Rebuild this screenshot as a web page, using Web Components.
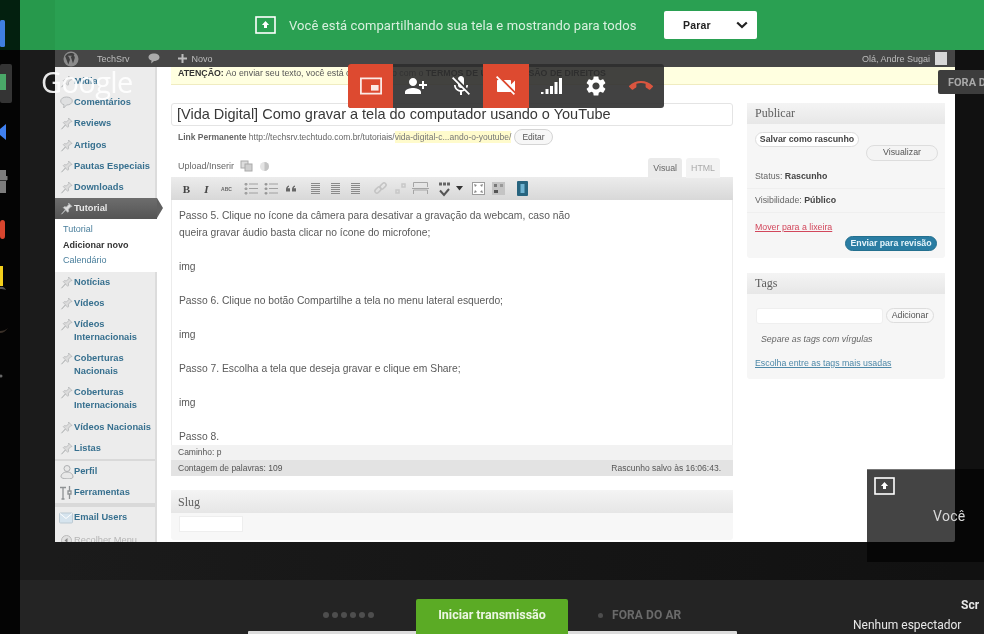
<!doctype html>
<html lang="pt-BR"><head><meta charset="utf-8"><title>Compartilhar tela</title>
<style>
html,body{margin:0;height:100%;background:#141414;overflow:hidden;font-family:"Liberation Sans",Arial,sans-serif}
</style></head><body>
<sr-app>
  <sr-dock slot="dock"></sr-dock>
  <sr-sharebar slot="top">Você está compartilhando sua tela e mostrando para todos</sr-sharebar>
  <sr-screen slot="stage">
    <wp-adminbar slot="bar"></wp-adminbar>
    <wp-menu slot="menu">
      <wp-item icon="pin">Mídia</wp-item>
      <wp-item icon="comment">Comentários</wp-item>
      <wp-item icon="pin">Reviews</wp-item>
      <wp-item icon="pin">Artigos</wp-item>
      <wp-item icon="pin">Pautas Especiais</wp-item>
      <wp-item icon="pin">Downloads</wp-item>
      <wp-item icon="pin" current>Tutorial</wp-item>
      <wp-sub>
        <span>Tutorial</span><b>Adicionar novo</b><span>Calendário</span>
      </wp-sub>
      <wp-item icon="pin">Notícias</wp-item>
      <wp-item icon="pin">Vídeos</wp-item>
      <wp-item icon="pin">Vídeos<br>Internacionais</wp-item>
      <wp-item icon="pin">Coberturas<br>Nacionais</wp-item>
      <wp-item icon="pin">Coberturas<br>Internacionais</wp-item>
      <wp-item icon="pin">Vídeos Nacionais</wp-item>
      <wp-item icon="pin">Listas</wp-item>
      <wp-sep></wp-sep>
      <wp-item icon="user">Perfil</wp-item>
      <wp-item icon="tools">Ferramentas</wp-item>
      <wp-sep style="height:4px"></wp-sep>
      <wp-item icon="mail">Email Users</wp-item>
      <wp-item icon="back" muted>Recolher Menu</wp-item>
    </wp-menu>
    <wp-content slot="content">
      <wp-post slot="main"></wp-post>
      <wp-box slot="side" heading="Publicar"><wp-publish></wp-publish></wp-box>
      <wp-box slot="side" heading="Tags" style="margin-top:15px"><wp-tags></wp-tags></wp-box>
    </wp-content>
  </sr-screen>
  <sr-footer slot="bottom"></sr-footer>
  <sr-overlays slot="over"></sr-overlays>
</sr-app>
<script>
function def(name, css, html, extra){
  const t=document.createElement('template');
  t.innerHTML='<style>'+css+'</style>'+html;
  customElements.define(name,class extends HTMLElement{
    constructor(){super();this.attachShadow({mode:'open'}).appendChild(t.content.cloneNode(true));}
    connectedCallback(){ if(extra) extra(this); }
  });
}
const P={
 pip:'<svg width="24" height="24" viewBox="0 0 24 24"><path fill-rule="evenodd" fill="#fbe9e5" d="M1 3.500h22v17H1zM2.800 5.300v13.400h18.400V5.300z"/><rect x="12" y="11" width="7.600" height="5.600" fill="#fbe9e5"/></svg>',
 add:'<svg width="24" height="24" viewBox="0 0 24 24"><path transform="matrix(-1 0 0 1 24 0)" fill="#fff" d="M15 12c2.210 0 4-1.790 4-4s-1.790-4-4-4-4 1.790-4 4 1.790 4 4 4zm-9-2V7H4v3H1v2h3v3h2v-3h3v-2H6zm9 4c-2.670 0-8 1.340-8 4v2h16v-2c0-2.660-5.330-4-8-4z"/></svg>',
 mic:'<svg width="24" height="24" viewBox="0 0 24 24"><path fill="#fff" d="M19 11h-1.700c0 .74-.16 1.430-.43 2.050l1.230 1.230c.56-.98.9-2.090.9-3.280zm-4.020.17c0-.06.02-.11.02-.17V5c0-1.660-1.340-3-3-3S9 3.340 9 5v.18l5.980 5.990zM4.270 3L3 4.270l6.010 6.010V11c0 1.660 1.330 3 2.990 3 .22 0 .44-.03.65-.08l1.660 1.660c-.71.33-1.500.52-2.310.52-2.760 0-5.300-2.100-5.300-5.100H5c0 3.410 2.720 6.230 6 6.720V21h2v-3.280c.91-.13 1.770-.45 2.540-.9L19.730 21 21 19.730 4.270 3z"/></svg>',
 cam:'<svg width="24" height="24" viewBox="0 0 24 24"><path fill="#fff" d="M21 6.500l-4 4V7c0-.55-.45-1-1-1H9.820L21 17.180V6.500zM3.270 2L2 3.270 4.730 6H4c-.55 0-1 .45-1 1v10c0 .55.45 1 1 1h12c.21 0 .39-.08.54-.18L19.730 21 21 19.730 3.270 2z"/></svg>',
 sig:'<svg width="24" height="24" viewBox="0 0 24 24"><path fill="#fff" d="M2 20h2.500v-2H2zM6.500 20h3v-5h-3zM11 20h3v-8h-3zM15.500 20h3V8h-3zM20 20h3V4h-3z"/></svg>',
 gear:'<svg width="24" height="24" viewBox="0 0 24 24"><path fill="#fff" d="M19.14 12.94c.04-.3.06-.61.06-.94 0-.32-.02-.64-.07-.94l2.03-1.58c.18-.14.23-.41.12-.61l-1.92-3.32c-.12-.22-.37-.29-.59-.22l-2.39.96c-.5-.38-1.03-.7-1.62-.94l-.36-2.54c-.04-.24-.24-.41-.48-.41h-3.84c-.24 0-.43.17-.47.41l-.36 2.54c-.59.24-1.13.57-1.62.94l-2.39-.96c-.22-.08-.47 0-.59.22L2.74 8.87c-.12.21-.08.47.12.61l2.03 1.58c-.05.3-.09.63-.09.94s.02.64.07.94l-2.03 1.58c-.18.14-.23.41-.12.61l1.92 3.32c.12.22.37.29.59.22l2.39-.96c.5.38 1.03.7 1.62.94l.36 2.54c.05.24.24.41.48.41h3.84c.24 0 .44-.17.47-.41l.36-2.54c.59-.24 1.13-.56 1.62-.94l2.39.96c.22.08.47 0 .59-.22l1.92-3.32c.12-.22.07-.47-.12-.61l-2.010-1.58zM12 15.600c-1.980 0-3.600-1.620-3.600-3.600s1.620-3.600 3.600-3.600 3.600 1.620 3.600 3.600-1.620 3.600-3.600 3.600z"/></svg>',
 end:'<svg width="24" height="24" viewBox="0 0 24 24"><path fill="#d9553f" d="M12 9c-1.600 0-3.150.25-4.600.72v3.100c0 .39-.23.74-.56.9-.98.49-1.870 1.120-2.660 1.850-.18.18-.43.28-.7.28-.28 0-.53-.11-.71-.29L.29 13.080c-.18-.17-.29-.42-.29-.7 0-.28.11-.53.29-.71C3.340 8.780 7.460 7 12 7s8.660 1.780 11.710 4.670c.18.18.29.43.29.71 0 .28-.11.53-.29.71l-2.480 2.480c-.18.18-.43.29-.71.29-.27 0-.52-.11-.7-.28-.79-.74-1.690-1.360-2.670-1.850-.33-.16-.56-.5-.56-.9v-3.100C15.150 9.250 13.600 9 12 9z"/></svg>',
 share:'<svg width="21" height="18" viewBox="0 0 21 18"><rect x="1" y="1" width="19" height="16" fill="none" stroke="#fff" stroke-width="1.600"/><path fill="#fff" d="M10.500 5l3.600 4h-2.100v3h-3V9H6.900z"/></svg>',
 pin:'<svg width="15" height="15" viewBox="0 0 15 15"><path fill="#dcdcdc" stroke="#b4b6b8" stroke-width=".8" d="M9.500 2l3.500 3.500-1.300.3-2.300 2.400.2 2.300-.9.8-2.100-2.200-4.100 4.100 3.800-4.500-2-2.100.9-.9 2.300.2 2.300-2.300z"/></svg>',
 comment:'<svg width="15" height="15" viewBox="0 0 15 15"><path fill="#dfe0e1" stroke="#b9bbbd" d="M7.500 2c3.300 0 5.800 1.700 5.800 4s-2.500 4-5.800 4l-2.800 3 .3-3.300C3 9.200 1.700 7.800 1.700 6c0-2.300 2.500-4 5.800-4z"/></svg>',
 user:'<svg width="15" height="15" viewBox="0 0 15 15" fill="#e8e8e8" stroke="#aeb0b2"><circle cx="8" cy="4.500" r="3"/><path d="M2 13c0-3 2.500-5 6-5s6 2 6 5-12 2-12 0z"/></svg>',
 tools:'<svg width="15" height="15" viewBox="0 0 15 15" fill="none" stroke="#8f9294" stroke-width="1.300"><path d="M1 2.500h6M4 2.500V14M2.500 14h3M10.500 1v5M10.500 9v5M9 6h3v3H9z"/></svg>',
 mail:'<svg width="15" height="15" viewBox="0 0 15 15"><rect x=".5" y="3" width="13" height="10" rx="1" fill="#d6e4ee" stroke="#bccad3"/><path d="M1 3.500l6 5 6-5" fill="none" stroke="#fff"/></svg>',
 back:'<svg width="15" height="15" viewBox="0 0 15 15"><circle cx="7.500" cy="7.500" r="5" fill="#e0e0e0" stroke="#bbb"/><path d="M8.500 5l-3 2.500 3 2.500z" fill="#888"/></svg>',
 wp:'<svg width="16" height="16" viewBox="0 0 16 16"><circle cx="8" cy="8" r="7.500" fill="#8c8c8c"/><path fill="#3f3f3f" d="M2.300 5.500l3 8 1.700-4.800L5.800 5.500H4.900v-.8h3.800v.8H7.700l2.300 7 1.700-5.200c.4-1.300-.3-2-.7-2.600-.4-.6 0-1.300.7-1.300-2.500-2.200-7.300-1.800-9.700 2.100z"/></svg>',
 bubble:'<svg width="12" height="11" viewBox="0 0 12 11"><path fill="#aaa" d="M6 .5c3 0 5.500 1.500 5.500 3.700S9 7.900 6 7.900L3.200 10.500l.3-3C1.700 6.900.5 5.700.5 4.200.5 2 3 .5 6 .5z"/></svg>',
 plus:'<svg width="9" height="9" viewBox="0 0 9 9"><path fill="#bbb" d="M3.500 0h2v3.500H9v2H5.500V9h-2V5.500H0v-2h3.500z"/></svg>',
 chev:'<svg width="12" height="8" viewBox="0 0 12 8"><path fill="none" stroke="#222" stroke-width="2.200" d="M1.200 1.500L6 6l4.800-4.500"/></svg>'
};
/* ---------- shell ---------- */
def('sr-app',`
 :host{display:flex;width:984px;height:634px;position:relative;overflow:hidden;filter:blur(.6px);background:#141414}
 .dock{width:20px;flex:none;background:#040404}
 .main{flex:1;min-width:0;display:flex;flex-direction:column}
 .stage{flex:1;min-height:0;padding-left:35px;background:linear-gradient(90deg,#1b1b1b 0,#1b1b1b 35px,#111 935px)}
`,`<div class="dock"><slot name="dock"></slot></div>
 <div class="main"><slot name="top"></slot><div class="stage"><slot name="stage"></slot></div><slot name="bottom"></slot></div>
 <slot name="over"></slot>`);
def('sr-dock',`:host{display:block;height:634px}svg{display:block}`,`
 <svg width="20" height="634" viewBox="0 0 20 634">
  <rect x="0" y="0" width="20" height="50" fill="#03200f"/>
  <rect x="0" y="20" width="5" height="27" rx="1.500" fill="#3f7fe0"/>
  <rect x="0" y="64" width="12" height="39" rx="2" fill="#343434"/>
  <rect x="0" y="74" width="6" height="16" fill="#4aa868"/>
  <path d="M6 124v16L0 135v-6z" fill="#3f80f0"/>
  <path d="M0 170h6v6h1.500v4H6v13H0z" fill="#7d7d7d"/><rect x="0" y="180" width="7" height="1" fill="#333"/>
  <rect x="0" y="220" width="5" height="19" rx="3" fill="#d8452e"/>
  <rect x="0" y="266" width="3" height="20" fill="#f3cf1c"/>
  <path d="M0 287c3-1 5 1 6 3-2-1-4-1-6-1z" fill="#555"/>
  <path d="M0 331c3 0 6-1 8-3-2 3-5 5-8 5z" fill="#3a3028"/>
  <circle cx="1" cy="376" r="1.500" fill="#666"/>
 </svg>`);
def('sr-sharebar',`
 :host{display:flex;align-items:center;height:50px;flex:none;box-sizing:border-box;padding-left:235px;
   background:linear-gradient(90deg,#27994c 0,#27994c 35px,#2aa052 35.5px);color:#d9f0df;font:13px/1 Roboto,"Liberation Sans",sans-serif;letter-spacing:.1px}
 svg{display:block}
 .t{margin-left:13px;width:375px;white-space:nowrap}
 .stop{width:93px;height:28px;box-sizing:border-box;background:#fff;border-radius:2px;display:flex;align-items:center;justify-content:space-between;padding:0 9px 0 19px;color:#222;font:bold 10.500px "Liberation Sans",sans-serif;letter-spacing:.2px}
`,`${P.share}<span class="t"><slot></slot></span><div class="stop">Parar ${P.chev}</div>`);
def('sr-screen',`
 :host{display:block;width:900px;height:492px;background:#fff;overflow:hidden}
 .b{display:flex;height:475px}
 .m{width:102px;flex:none}
 .c{flex:1;min-width:0}
`,`<slot name="bar"></slot><div class="b"><div class="m"><slot name="menu"></slot></div><div class="c"><slot name="content"></slot></div></div>`);
def('wp-adminbar',`
 :host{display:flex;align-items:center;height:17px;background:#464646;color:#bdbdbd;font-size:9px;padding-left:8px;padding-right:8px}
 svg{display:block}
 .s{margin-left:18px}.n{margin-left:18px;display:flex;align-items:center;gap:5px}
 .r{margin-left:auto;display:flex;align-items:center;gap:5px}
 .av{width:12px;height:13px;background:#d8d8d8;display:block}
`,`${P.wp}<span class="s">TechSrv</span><span class="s" style="display:flex">${P.bubble}</span><span class="n">${P.plus} Novo</span>
 <span class="r">Olá, Andre Sugai <i class="av"></i></span>`);
/* ---------- menu ---------- */
def('wp-menu',`:host{display:block;height:475px;box-sizing:border-box;padding-top:4px;background:#ececec;border-right:2px solid #dcdcdc}
 `,`<slot></slot>`);
def('wp-item',`
 :host{display:flex;width:102px;box-sizing:border-box;padding:4.100px 4px;color:#37708f;font:bold 9.300px/13px "Liberation Sans",sans-serif;position:relative}
 :host([current]){background:linear-gradient(#6d6d6d,#555);color:#e8e8e8;height:21px}
 :host([muted]){color:#b5b5b5;font-weight:normal;margin-top:1px}
 .i{width:15px;height:13px;flex:none}
 .i svg{display:block;margin-top:-1px}
 .t{white-space:nowrap}
 .a{display:none;position:absolute;left:102px;top:0;width:0;height:0;border-top:10.500px solid transparent;border-bottom:10.500px solid transparent;border-left:6px solid #606060}
 :host([current]) .a{display:block}
`,`<span class="i"></span><span class="t"><slot></slot></span><i class="a"></i>`,el=>{
   el.shadowRoot.querySelector('.i').innerHTML=P[el.getAttribute('icon')]||'';
 });
def('wp-sub',`:host{display:flex;flex-direction:column;background:#fff;padding:3px 0 3px 8px;width:102px;box-sizing:border-box;color:#4a7f9c;font:9px/15.500px "Liberation Sans",sans-serif}
 ::slotted(b){color:#333;font-weight:bold}`,`<slot></slot>`);
def('wp-sep',`:host{display:block;height:2px;background:#d9d9d9;width:100px}`,``);
/* ---------- content ---------- */
def('wp-content',`
 :host{display:block;height:475px;overflow:hidden;background:#fff}
 .n{height:18px;box-sizing:border-box;margin-left:14px;padding:0 0 0 7px;background:#ffffe0;border-bottom:1px solid #f0ecc0;font:8.800px/12px "Liberation Sans",sans-serif;color:#555;white-space:nowrap}
 b{color:#333}
 .g{display:grid;grid-template-columns:562px 198px;column-gap:14px;margin:18px 0 0 14px}
`,`<div class="n"><b>ATENÇÃO:</b> Ao enviar seu texto, você está concordando com o <b>TERMOS DE USO E CESSÃO DE DIREITOS</b></div>
 <div class="g"><div><slot name="main"></slot></div><div><slot name="side"></slot></div></div>`);
const TB=[['B','b'],['I','i'],['ABC','s'],0,['l'],['o'],['q'],0,['al'],['ac'],['ar'],0,['lk'],['ul'],['mo'],0,['sp'],['dd'],0,['fs'],['kb'],0,['bl']];
function tbIcon(k){
 const s='#a0a0a0';
 switch(k){
  case 'l':case 'o':return `<svg width="15" height="15" viewBox="0 0 15 15" stroke="${s}" fill="none"><path d="M5 3h9M5 7.500h9M5 12h9"/><path d="M1 2.500h2v1.500H1zM1 7h2v1.500H1zM1 11.500h2V13H1z" fill="${k=='o'?'#777':s}"/></svg>`;
  case 'q':return `<svg width="15" height="15" viewBox="0 0 15 15" fill="#666"><path d="M2 8.500c0-2 1-3.500 3-4v1.200c-.8.300-1.200.800-1.300 1.500H6v3.300H2zM8 8.500c0-2 1-3.500 3-4v1.200c-.8.300-1.200.800-1.300 1.500H12v3.300H8z"/></svg>`;
  case 'al':case 'ac':case 'ar':return `<svg width="15" height="15" viewBox="0 0 15 15" stroke="#8a8a8a"><path d="M3 2.500h9M3 4.500h9M3 6.500h9M3 8.500h9M3 10.500h9M3 12.500h9"/></svg>`;
  case 'lk':return `<svg width="15" height="15" viewBox="0 0 15 15" fill="none" stroke="#c4c4c4" stroke-width="1.500"><rect x="1.500" y="7" width="7" height="4" rx="2" transform="rotate(-45 5 9)"/><rect x="6.500" y="3" width="7" height="4" rx="2" transform="rotate(-45 10 5)"/></svg>`;
  case 'ul':return `<svg width="15" height="15" viewBox="0 0 15 15" fill="none" stroke="#c8c8c8" stroke-width="1.500"><path d="M3 12V9h3v3zM9 6V3h3v3z"/></svg>`;
  case 'mo':return `<svg width="17" height="15" viewBox="0 0 17 15" fill="none" stroke="#a5a5a5"><path d="M1.500 6V1.500h14V6M1.500 13v-4h14v4M0 7.500h17" /></svg>`;
  case 'sp':return `<svg width="15" height="16" viewBox="0 0 15 16"><path d="M3 9.500l4 4.500 5-6" fill="none" stroke="#555" stroke-width="2"/><path d="M2 3h3M6 3h3M10 3h3" stroke="#666" stroke-width="3"/></svg>`;
  case 'dd':return `<svg width="7" height="5" viewBox="0 0 7 5"><path d="M0 0h7L3.500 4.500z" fill="#333"/></svg>`;
  case 'fs':return `<svg width="15" height="15" viewBox="0 0 15 15" fill="#fff" stroke="#9c9c9c"><rect x="1.500" y="1.500" width="12" height="12"/><path d="M3 3l3 1-2 2zM12 3l-1 3-2-2zM3 12l1-3 2 2zM12 12l-3-1 2-2z" fill="#888" stroke="none"/></svg>`;
  case 'kb':return `<svg width="15" height="15" viewBox="0 0 15 15"><rect x="1" y="1" width="13" height="13" fill="#c4c4c4"/><rect x="3" y="3" width="3" height="3" fill="#777"/><rect x="9" y="3" width="3" height="3" fill="#999"/><rect x="3" y="9" width="4" height="3" fill="#555"/></svg>`;
  case 'bl':return `<svg width="11" height="15" viewBox="0 0 11 15"><rect width="11" height="15" rx="1" fill="#27647f"/><rect x="3.500" y="3" width="4" height="9" fill="#6fb3d2"/></svg>`;
 }
}
def('wp-post',`
 :host{display:block;color:#555;font:9px/12px "Liberation Sans",sans-serif}
 .title{height:23px;box-sizing:border-box;border:1px solid #e4e4e4;border-radius:3px;padding:0 5px;font:14.500px/21px "Liberation Sans",sans-serif;color:#383838;white-space:nowrap}
 .link{display:flex;align-items:center;height:16px;margin-top:3px;padding-left:7px;font-size:8.500px;white-space:nowrap;color:#666}
 .link mark{background:#fffbcc;color:#777}
 .pill{margin-left:3px;height:14px;padding:0 7px;border:1px solid #d5d5d5;border-radius:8px;line-height:14px;color:#555;background:#f7f7f7}
 .media{display:flex;justify-content:space-between;align-items:flex-end;height:23px;margin-top:10px;margin-bottom:-1px;padding:0 13px 0 7px}
 .up{display:flex;align-items:center;gap:6px;height:20px;padding-bottom:2px;color:#666}
 .tabs{display:flex;gap:4px}
 .tab{height:20px;line-height:20px;padding:0 5px;background:#eaeaea;border-radius:3px 3px 0 0;color:#666;font-size:8.800px}
 .tab+.tab{background:#f3f3f3;color:#aaa}
 .frame{border:1px solid #ececec;border-top:0;border-bottom:0}
 .tb{display:flex;align-items:center;height:23px;padding-left:6px;gap:1px;background:linear-gradient(#ececec,#d8d8d8)}
 .tb span{width:19px;height:19px;display:flex;align-items:center;justify-content:center;font:bold 11px "Liberation Serif",serif;color:#444;flex:none}
 .tb span.i{font-style:italic}.tb span.s{font:bold 5px "Liberation Sans",sans-serif;color:#666}
 .tb span.dd{width:12px;margin-left:-2px;margin-right:-2px}
 .tb em{width:3.500px;flex:none}
 .ed{height:245px;box-sizing:border-box;padding:6.500px 7px 0;overflow:hidden;font:10.300px/17.050px "Liberation Sans",sans-serif;color:#5a5a5a;white-space:nowrap;background:#fff}
 .path{height:15px;line-height:15px;padding-left:7px;background:#f2f2f2;font-size:8.500px}
 .count{height:16px;line-height:16px;padding:0 12px 0 7px;background:#e3e3e3;display:flex;justify-content:space-between;font-size:8.500px;color:#555}
 .slug{margin-top:14px;height:50px;background:#f7f7f7;border-radius:3px}
 .slug h3{margin:0;height:23px;padding-left:7px;background:linear-gradient(#f4f4f4,#e6e6e6);font:normal 12px/24px "Liberation Serif",serif;color:#5f5f5f}
 .slug div{margin:3px 0 0 8px;width:64px;height:16px;background:#fff;border:1px solid #eee;box-sizing:border-box}
`,`<div class="title">[Vida Digital] Como gravar a tela do computador usando o YouTube</div>
 <div class="link"><b>Link Permanente</b>&nbsp;http://techsrv.techtudo.com.br/tutoriais/<mark>vida-digital-c...ando-o-youtube/</mark><span class="pill">Editar</span></div>
 <div class="media"><div class="up">Upload/Inserir <svg width="13" height="12" viewBox="0 0 13 12"><rect x="1" y="1" width="7" height="7" fill="#ddd" stroke="#aaa"/><rect x="5" y="4" width="7" height="7" fill="#cfcfcf" stroke="#aaa"/></svg><svg width="11" height="11" viewBox="0 0 11 11"><circle cx="5.500" cy="5.500" r="4.500" fill="#e4e4e4"/><path d="M5.500 1a4.500 4.500 0 0 1 0 9z" fill="#c4c4c4"/></svg></div>
  <div class="tabs"><div class="tab">Visual</div><div class="tab">HTML</div></div></div>
 <div class="tb" id="tb"></div>
 <div class="frame"><div class="ed">Passo 5. Clique no ícone da câmera para desativar a gravação da webcam, caso não<br>queira gravar áudio basta clicar no ícone do microfone;<br><br>img<br><br>Passo 6. Clique no botão Compartilhe a tela no menu lateral esquerdo;<br><br>img<br><br>Passo 7. Escolha a tela que deseja gravar e clique em Share;<br><br>img<br><br>Passo 8.</div></div>
 <div class="path">Caminho: p</div>
 <div class="count"><span>Contagem de palavras: 109</span><span>Rascunho salvo às 16:06:43.</span></div>
 <div class="slug"><h3>Slug</h3><div></div></div>`,el=>{
   const tb=el.shadowRoot.getElementById('tb');
   tb.innerHTML=TB.map(x=>{
     if(!x) return '<em></em>';
     if(x.length==2) return `<span class="${x[1]}">${x[0]}</span>`;
     return `<span class="${x[0]=='dd'?'dd':''}">${tbIcon(x[0])}</span>`;
   }).join('');
 });
def('wp-box',`
 :host{display:block;background:#f6f6f6;border-radius:3px;font:8.800px/12px "Liberation Sans",sans-serif;color:#666}
 h3{margin:0;height:21px;padding-left:8px;background:linear-gradient(#f4f4f4,#e7e7e7);font:normal 12px/21px "Liberation Serif",serif;color:#5f5f5f}
`,`<h3></h3><slot></slot>`,el=>{el.shadowRoot.querySelector('h3').textContent=el.getAttribute('heading');});
const BTN=`.b{display:inline-block;height:15px;line-height:13px;box-sizing:border-box;border:1px solid #ddd;border-radius:8px;background:#fff;text-align:center;color:#555;white-space:nowrap}`;
def('wp-publish',`
 :host{display:block;height:134px;box-sizing:border-box;padding:8px 8px 0 8px}
 ${BTN}
 .save{display:block;width:104px;font-weight:bold;color:#444}
 .view{display:block;width:72px;height:16px;margin:-2px 0 0 111px;background:#f4f4f4}
 .row{height:23px;line-height:23px;border-bottom:1px solid #efefef;margin:0 -8px;padding-left:8px}
 .row b{color:#444}
 .first{margin-top:4px}
 .del{display:block;margin-top:8px;color:#d2475c;text-decoration:underline;width:max-content}
 .send{display:block;margin:3px 0 0 90px;width:92px;background:#2a7da3;border-color:#24708f;color:#e6f4fa;font-weight:bold}
`,`<span class="b save">Salvar como rascunho</span><span class="b view">Visualizar</span>
 <div class="row first">Status: <b>Rascunho</b></div><div class="row">Visibilidade: <b>Público</b></div>
 <span class="del">Mover para a lixeira</span><span class="b send">Enviar para revisão</span>`);
def('wp-tags',`
 :host{display:block;height:85px;box-sizing:border-box;padding:14px 8px 0 9px}
 ${BTN}
 .r{display:flex;gap:3px}
 .in{width:127px;height:16px;background:#fff;border-radius:3px;border:1px solid #efefef;box-sizing:border-box}
 .add{width:48px;background:#f8f8f8}
 .h{margin:9px 0 0 5px;font-style:italic;color:#666}
 a{display:block;margin-top:12px;margin-left:-1px;color:#4d88a8;text-decoration:underline}
`,`<div class="r"><div class="in"></div><span class="b add">Adicionar</span></div><div class="h">Separe as tags com vírgulas</div><a>Escolha entre as tags mais usadas</a>`);
/* ---------- footer ---------- */
def('sr-footer',`
 :host{display:flex;height:54px;flex:none;position:relative;background:#242424;padding-left:303px;overflow:hidden;font-family:Roboto,"Liberation Sans",sans-serif}
 .d{display:flex;gap:3px;align-items:center;height:70px;width:93px;flex:none}
 .d i{width:6px;height:6px;border-radius:50%;background:#4e4e4e}
 .go{position:relative;z-index:1;flex:none;margin-top:19px;width:152px;height:35px;background:#5bab25;border-radius:2px 2px 0 0;color:#ecf6e3;font:bold 12.500px/32px Roboto,"Liberation Sans",sans-serif;text-align:center}
 .off{margin:27px 0 0 30px;display:flex;align-items:center;height:16px;color:#6a6a6a;font:bold 12px Roboto,"Liberation Sans",sans-serif;letter-spacing:.1px;white-space:nowrap;flex:none;width:255px}
 .off i{width:5px;height:5px;border-radius:50%;background:#4d4d4d;margin-right:9px}
 .rt{flex:none;color:#e8e8e8;font-size:12px;white-space:nowrap;line-height:20px;margin-top:15px}
 .rt b{display:block;margin-left:108px}
 .strip{position:absolute;left:228px;top:51px;width:489px;height:3px;background:#dcdcdc;border-radius:1px 1px 0 0}
`,`<div class="d"><i></i><i></i><i></i><i></i><i></i><i></i></div><div class="go">Iniciar transmissão</div>
 <div class="off"><i></i>FORA DO AR</div><div class="rt"><b>Scr</b>Nenhum espectador</div><div class="strip"></div>`);
/* ---------- overlays ---------- */
def('sr-overlays',`
 :host{display:contents}
 .g{position:absolute;left:41px;top:63px;font:400 29px/38px "Open Sans","Liberation Sans",sans-serif;color:#fff;opacity:.9;letter-spacing:-.6px}
 .call{position:absolute;left:348px;top:64px;width:316px;height:44px;background:rgba(45,45,45,.9);border-radius:3px;display:flex;overflow:hidden}
 .call span{flex:1;display:flex;align-items:center;justify-content:center}
 .call .on{background:#dd4a30}
 .call svg{display:block}
 .fora{position:absolute;left:938px;top:70px;width:46px;height:24px;overflow:hidden;background:#3d3d3d;border-radius:2px 0 0 2px;color:#a8a8a8;font:bold 11px/25px Roboto,"Liberation Sans",sans-serif;padding-left:10px;box-sizing:border-box;white-space:nowrap}
 .sh{position:absolute;left:867px;top:469px;width:117px;height:93px;background:#060606}
 .pop{position:absolute;left:867px;top:469px;width:88px;height:73px;background:#444;border-radius:0 0 2px 0;border-top:1px solid #777;box-sizing:border-box}
 .pop svg{position:absolute;left:7px;top:7px;display:block}
 .you{position:absolute;left:933px;top:507px;color:#d8d8d8;font:14px/18px Roboto,"Liberation Sans",sans-serif;letter-spacing:.3px}
`,`<div class="g">Google</div>
 <div class="call"><span class="on">${P.pip}</span><span>${P.add}</span><span>${P.mic}</span><span class="on">${P.cam}</span><span>${P.sig}</span><span>${P.gear}</span><span>${P.end}</span></div>
 <div class="fora">FORA DO AR</div>
 <div class="sh"></div><div class="pop">${P.share}</div><div class="you">Você</div>`);
</script>
</body></html>
